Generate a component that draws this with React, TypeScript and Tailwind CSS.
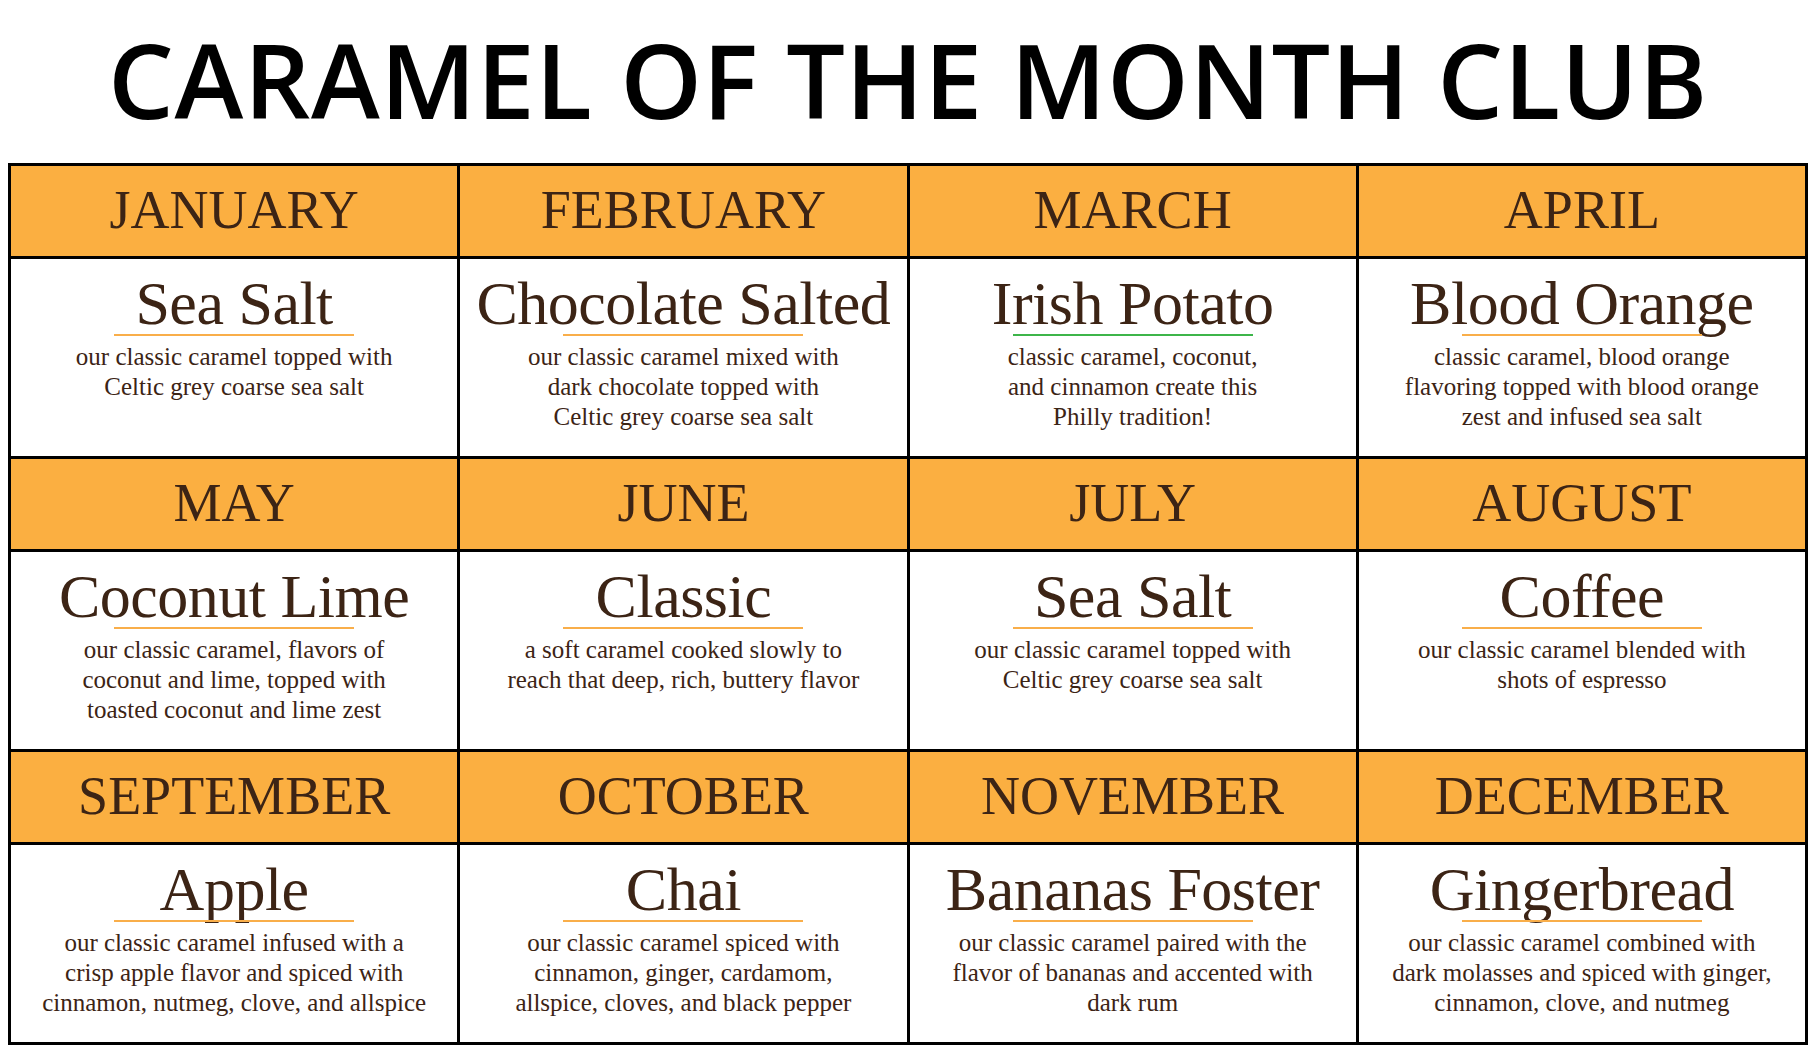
const months = [
  {
    month: "JANUARY",
    flavor: "Sea Salt",
    lines: ["our classic caramel topped with", "Celtic grey coarse sea salt"],
  },
  {
    month: "FEBRUARY",
    flavor: "Chocolate Salted",
    lines: ["our classic caramel mixed with", "dark chocolate topped with", "Celtic grey coarse sea salt"],
  },
  {
    month: "MARCH",
    flavor: "Irish Potato",
    lines: ["classic caramel, coconut,", "and cinnamon create this", "Philly tradition!"],
    green: true,
  },
  {
    month: "APRIL",
    flavor: "Blood Orange",
    lines: ["classic caramel, blood orange", "flavoring topped with blood orange", "zest and infused sea salt"],
  },
  {
    month: "MAY",
    flavor: "Coconut Lime",
    lines: ["our classic caramel, flavors of", "coconut and lime, topped with", "toasted coconut and lime zest"],
  },
  {
    month: "JUNE",
    flavor: "Classic",
    lines: ["a soft caramel cooked slowly to", "reach that deep, rich, buttery flavor"],
  },
  {
    month: "JULY",
    flavor: "Sea Salt",
    lines: ["our classic caramel topped with", "Celtic grey coarse sea salt"],
  },
  {
    month: "AUGUST",
    flavor: "Coffee",
    lines: ["our classic caramel blended with", "shots of espresso"],
  },
  {
    month: "SEPTEMBER",
    flavor: "Apple",
    lines: ["our classic caramel infused with a", "crisp apple flavor and spiced with", "cinnamon, nutmeg, clove, and allspice"],
  },
  {
    month: "OCTOBER",
    flavor: "Chai",
    lines: ["our classic caramel spiced with", "cinnamon, ginger, cardamom,", "allspice, cloves, and black pepper"],
  },
  {
    month: "NOVEMBER",
    flavor: "Bananas Foster",
    lines: ["our classic caramel paired with the", "flavor of bananas and accented with", "dark rum"],
  },
  {
    month: "DECEMBER",
    flavor: "Gingerbread",
    lines: ["our classic caramel combined with", "dark molasses and spiced with ginger,", "cinnamon, clove, and nutmeg"],
  },
];

type Month = (typeof months)[number];

function HeaderCell({ m }: { m: Month }) {
  return (
    <div className="flex items-center justify-center bg-[#fbaf41] pb-[3px]">
      <span className="font-['Liberation_Serif','Times_New_Roman',serif] text-[54px] leading-none text-[#3c2415]">
        {m.month}
      </span>
    </div>
  );
}

function FlavorCell({ m }: { m: Month }) {
  return (
    <div className="flex flex-col items-center bg-white pt-[13px] text-[#3c2415]">
      <div className="whitespace-nowrap font-['Liberation_Serif','Times_New_Roman',serif] text-[62px] leading-[62px] tracking-[-0.5px]">
        {m.flavor}
      </div>
      <div className={m.green ? "h-[2px] w-[240px] bg-[#3db54a]" : "h-[2px] w-[240px] bg-[#f9ae4a]"} />
      <div className="mt-[6px] text-center font-['Liberation_Serif','Times_New_Roman',serif] text-[25px] leading-[30px]">
        {m.lines.map((line) => (
          <div key={line} className="whitespace-nowrap">
            {line}
          </div>
        ))}
      </div>
    </div>
  );
}

export default function App() {
  const rows = [months.slice(0, 4), months.slice(4, 8), months.slice(8, 12)];

  return (
    <div className="min-h-screen w-[1819px] bg-white">
      <div className="ml-[8px] w-[1800px]">
        <div className="flex h-[163px] justify-center pt-[27px]">
          <h1 className="font-['Open_Sans','Noto_Sans',sans-serif] text-[104px] font-semibold leading-none tracking-[0.6px] text-black">
            CARAMEL OF THE MONTH CLUB
          </h1>
        </div>

        <div className="grid grid-cols-4 grid-rows-[90px_197px_90px_197px_90px_197px] gap-[3px] bg-black p-[3px]">
          {rows.map((row, i) => (
            <>
              {row.map((m) => (
                <HeaderCell key={`h-${i}-${m.month}`} m={m} />
              ))}
              {row.map((m) => (
                <FlavorCell key={`f-${i}-${m.month}`} m={m} />
              ))}
            </>
          ))}
        </div>
      </div>
    </div>
  );
}
